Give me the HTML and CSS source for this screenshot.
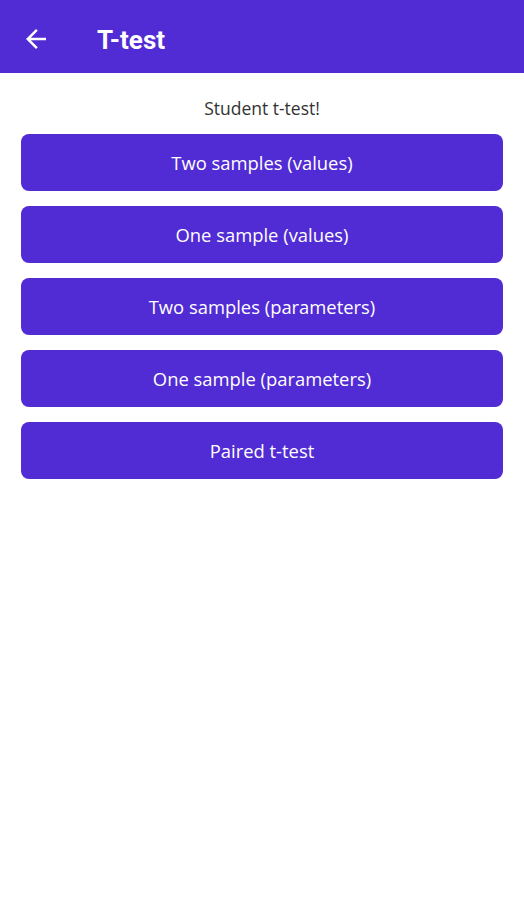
FILE: index.html
```html
<!DOCTYPE html>
<html>
<head>
<meta charset="utf-8">
<link rel="stylesheet" href="styles.css">
</head>
<body>
<header class="appbar">
  <svg class="back" width="30" height="30" viewBox="0 0 24 24"><path d="M20 11H7.83l5.59-5.59L12 4l-8 8 8 8 1.41-1.41L7.83 13H20v-2z" fill="#fff"/></svg>
  <h1 class="title">T-test</h1>
</header>
<main class="content">
  <p class="subtitle">Student t-test!</p>
  <div class="buttons">
    <button class="btn">Two samples (values)</button>
    <button class="btn">One sample (values)</button>
    <button class="btn">Two samples (parameters)</button>
    <button class="btn">One sample (parameters)</button>
    <button class="btn">Paired t-test</button>
  </div>
</main>
</body>
</html>
```
FILE: styles.css
```css
html, body { margin: 0; padding: 0; background: #fff; }
body { width: 524px; height: 900px; font-family: "Open Sans", sans-serif; }
.appbar {
  height: 73px;
  background: #512bd4;
  display: flex;
  align-items: center;
  padding-left: 21px;
  box-sizing: border-box;
}
.back { width: 30px; height: 30px; margin-top: 4px; }
.title {
  margin: 6px 0 0 46px;
  font-family: Roboto, sans-serif;
  font-weight: 700;
  font-size: 26px;
  color: #fff;
}
.content { padding: 0 21px; }
.subtitle {
  margin: 0;
  height: 24px;
  padding-top: 23px;
  padding-bottom: 14px;
  text-align: center;
  font-size: 17.5px;
  line-height: 24px;
  font-weight: 400;
  color: #333;
}
.buttons { display: flex; flex-direction: column; gap: 15px; }
.btn {
  height: 57px;
  border: none;
  border-radius: 8px;
  background: #512bd4;
  color: #fff;
  font-family: "Open Sans", sans-serif;
  font-size: 18.4px;
  padding: 0;
}
```
